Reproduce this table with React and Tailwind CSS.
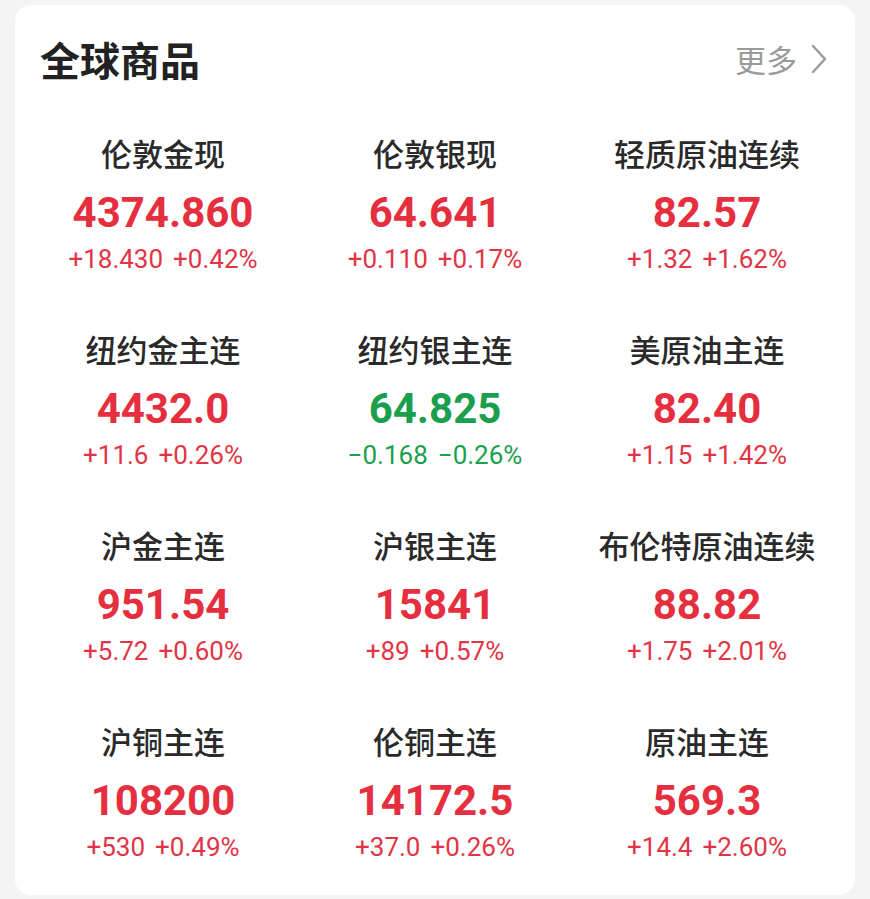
import React from "react";

const items = [
  { name: "伦敦金现", price: "4374.860", chg: "+18.430", pct: "+0.42%", up: true },
  { name: "伦敦银现", price: "64.641", chg: "+0.110", pct: "+0.17%", up: true },
  { name: "轻质原油连续", price: "82.57", chg: "+1.32", pct: "+1.62%", up: true },
  { name: "纽约金主连", price: "4432.0", chg: "+11.6", pct: "+0.26%", up: true },
  { name: "纽约银主连", price: "64.825", chg: "−0.168", pct: "−0.26%", up: false },
  { name: "美原油主连", price: "82.40", chg: "+1.15", pct: "+1.42%", up: true },
  { name: "沪金主连", price: "951.54", chg: "+5.72", pct: "+0.60%", up: true },
  { name: "沪银主连", price: "15841", chg: "+89", pct: "+0.57%", up: true },
  { name: "布伦特原油连续", price: "88.82", chg: "+1.75", pct: "+2.01%", up: true },
  { name: "沪铜主连", price: "108200", chg: "+530", pct: "+0.49%", up: true },
  { name: "伦铜主连", price: "14172.5", chg: "+37.0", pct: "+0.26%", up: true },
  { name: "原油主连", price: "569.3", chg: "+14.4", pct: "+2.60%", up: true },
];

const cjk = { fontFamily: '"Noto Sans CJK SC", "Noto Sans", sans-serif' };
const num = { fontFamily: 'Roboto, "Noto Sans", sans-serif' };

export default function App() {
  return (
    <div className="w-[870px] h-[899px] bg-[#f4f4f4] pt-[5px] px-[15px]">
      <div className="bg-white rounded-[16px] h-[890px] px-[12px]">
        <div className="flex items-center justify-between pt-[34px] pl-[13px] pr-[16px]">
          <div className="text-[40px] leading-[40px] font-bold text-[#222]" style={cjk}>
            全球商品
          </div>
          <div className="flex items-center gap-[14px] text-[#9a9a9a]">
            <span className="text-[31px] leading-[40px]" style={cjk}>更多</span>
            <svg width="16" height="30" viewBox="0 0 16 30" fill="none">
              <polyline points="2,2 14,15 2,28" stroke="#9a9a9a" strokeWidth="2.4" strokeLinecap="round" strokeLinejoin="round" />
            </svg>
          </div>
        </div>
        <div className="grid grid-cols-3 gap-y-[55px] mt-[54px]">
          {items.map((it, i) => (
            <div key={i} className="flex flex-col items-center">
              <div className="text-[31px] leading-[40px] font-medium text-[#2a2a2a]" style={cjk}>
                {it.name}
              </div>
              <div
                className={`mt-[16px] text-[42px] leading-[48px] font-bold ${it.up ? "text-[#e62f3e]" : "text-[#1a9f4e]"}`}
                style={num}
              >
                {it.price}
              </div>
              <div
                className={`mt-[7px] flex gap-[10px] text-[26px] leading-[30px] ${it.up ? "text-[#e23444]" : "text-[#1a9f4e]"}`}
                style={num}
              >
                <span>{it.chg}</span>
                <span>{it.pct}</span>
              </div>
            </div>
          ))}
        </div>
      </div>
    </div>
  );
}
